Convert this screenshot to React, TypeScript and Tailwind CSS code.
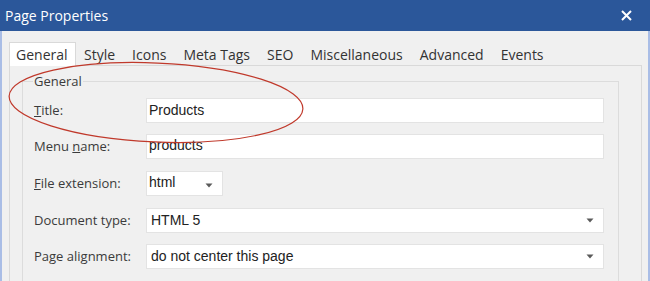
import React from "react";

const TABS = ["General", "Style", "Icons", "Meta Tags", "SEO", "Miscellaneous", "Advanced", "Events"];

const uiFont = "[font-family:'Segoe_UI','Open_Sans',sans-serif]";
const inputFont = "[font-family:'Liberation_Sans',Arial,sans-serif]";

function Arrow() {
  return (
    <svg width="8" height="5" viewBox="0 0 8 5" className="shrink-0">
      <path d="M0.5 0.5 H7.5 L4 4.5 Z" fill="#5a5a5a" />
    </svg>
  );
}

function Row({ label, children, className = "" }: { label: React.ReactNode; children: React.ReactNode; className?: string }) {
  return (
    <div className={`flex items-center h-[25px] ${className}`}>
      <div className="w-[112px] shrink-0 text-[13px] text-[#3b3b3b]">{label}</div>
      {children}
    </div>
  );
}

export default function App() {
  const boxClasses = `h-[25px] bg-white border border-[#e3e3e3] flex items-center ${inputFont} text-[14px] text-[#222]`;

  return (
    <div className={`relative w-[650px] h-[281px] overflow-hidden bg-[#f0f0f0] ${uiFont}`}>
      {/* Title bar */}
      <div className="h-[31px] bg-[#2b579a] flex items-center justify-between pl-[5px] pr-[18px] text-white">
        <span className="text-[14px] leading-none">Page Properties</span>
        <svg width="11" height="11" viewBox="0 0 11 11">
          <path d="M1 1 L10 10 M10 1 L1 10" stroke="white" strokeWidth="2" />
        </svg>
      </div>

      <div className="h-[250px] border-x-2 border-[#a9bde6] pl-[7px] pr-[6px] pt-[10px]">
        {/* Tabs */}
        <div className="flex h-[24px] items-end">
          {TABS.map((t, i) =>
            i === 0 ? (
              <div
                key={t}
                className="h-[24px] bg-white border border-b-0 border-[#d9d9d9] pl-[6px] pr-[7px] flex items-center text-[14px] text-[#333] relative top-px"
              >
                {t}
              </div>
            ) : (
              <div key={t} className="h-[22px] px-[8.5px] flex items-center text-[14px] text-[#333]">
                {t}
              </div>
            )
          )}
        </div>

        {/* Tab pane */}
        <div className="h-[240px] border border-[#d9d9d9] pl-[12px] pr-[22px] pt-[8px]">
          <fieldset className="border border-[#dcdcdc] pl-[11px] pr-[14px] pt-[9px] h-[220px]">
            <legend className="-ml-px px-px text-[13px] text-[#3b3b3b] leading-[14px]">General</legend>
            <div className="flex flex-col">
              <Row
                className="mt-px"
                label={
                  <>
                    <span className="underline">T</span>itle:
                  </>
                }
              >
                <div className={`${boxClasses} flex-1 pl-[2px]`}>Products</div>
              </Row>
              <Row
                className="mt-[11px]"
                label={
                  <>
                    Menu <span className="underline">n</span>ame:
                  </>
                }
              >
                <div className={`${boxClasses} flex-1 pl-[2px] pb-[3px]`}>products</div>
              </Row>
              <Row
                className="mt-[12px]"
                label={
                  <>
                    <span className="underline">F</span>ile extension:
                  </>
                }
              >
                <div className={`${boxClasses} w-[77px] pl-[2px] pr-[9px] justify-between`}>
                  <span className="pb-[2px]">html</span>
                  <span className="pt-[3px]">
                    <Arrow />
                  </span>
                </div>
              </Row>
              <Row className="mt-[12px]" label="Document type:">
                <div className={`${boxClasses} flex-1 pl-[4px] pr-[9px] justify-between`}>
                  <span>HTML 5</span>
                  <Arrow />
                </div>
              </Row>
              <Row className="mt-[11px]" label="Page alignment:">
                <div className={`${boxClasses} flex-1 pl-[4px] pr-[9px] justify-between`}>
                  <span>do not center this page</span>
                  <Arrow />
                </div>
              </Row>
            </div>
          </fieldset>
        </div>
      </div>

      {/* Red annotation ellipse */}
      <svg className="absolute left-0 top-0 pointer-events-none" width="650" height="281">
        <ellipse
          cx="156"
          cy="102.5"
          rx="147"
          ry="39.5"
          fill="none"
          stroke="#c0392b"
          strokeWidth="1.2"
          transform="rotate(2.5 156 102.5)"
        />
      </svg>
    </div>
  );
}
